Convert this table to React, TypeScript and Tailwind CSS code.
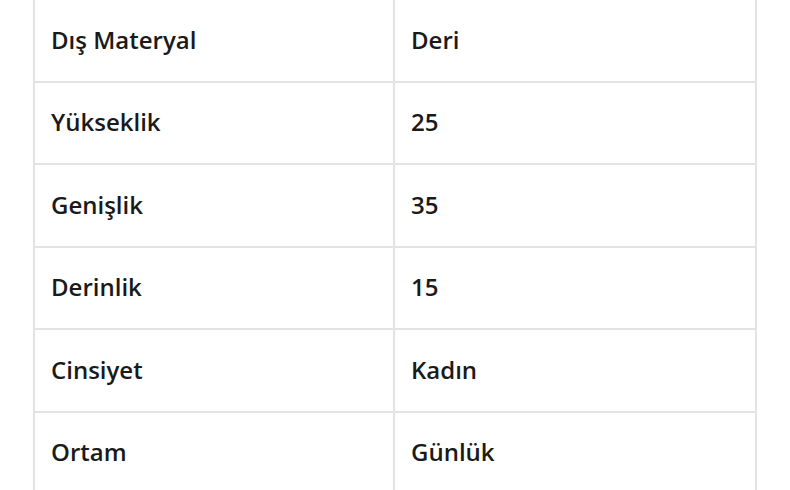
const ROWS: [string, string][] = [
  ['Dış Materyal', 'Deri'],
  ['Yükseklik', '25'],
  ['Genişlik', '35'],
  ['Derinlik', '15'],
  ['Cinsiyet', 'Kadın'],
  ['Ortam', 'Günlük'],
]

export default function App() {
  return (
    <div className="w-[790px] h-[490px] overflow-hidden bg-white" style={{ fontFamily: '"Open Sans", sans-serif' }}>
      <div className="ml-[33px] w-[724px] border-x-2 border-[#e3e3e3]">
        {ROWS.map(([k, v]) => (
          <div key={k} className="grid grid-cols-2 h-[82.5px] border-b-2 border-[#e3e3e3]">
            <div className="flex items-center pl-4 pb-px border-r-2 border-[#e3e3e3] text-[24px] font-semibold text-[#1a1a1a]">
              {k}
            </div>
            <div className="flex items-center pl-4 pb-px text-[24px] font-semibold text-[#1a1a1a]">{v}</div>
          </div>
        ))}
      </div>
    </div>
  )
}
